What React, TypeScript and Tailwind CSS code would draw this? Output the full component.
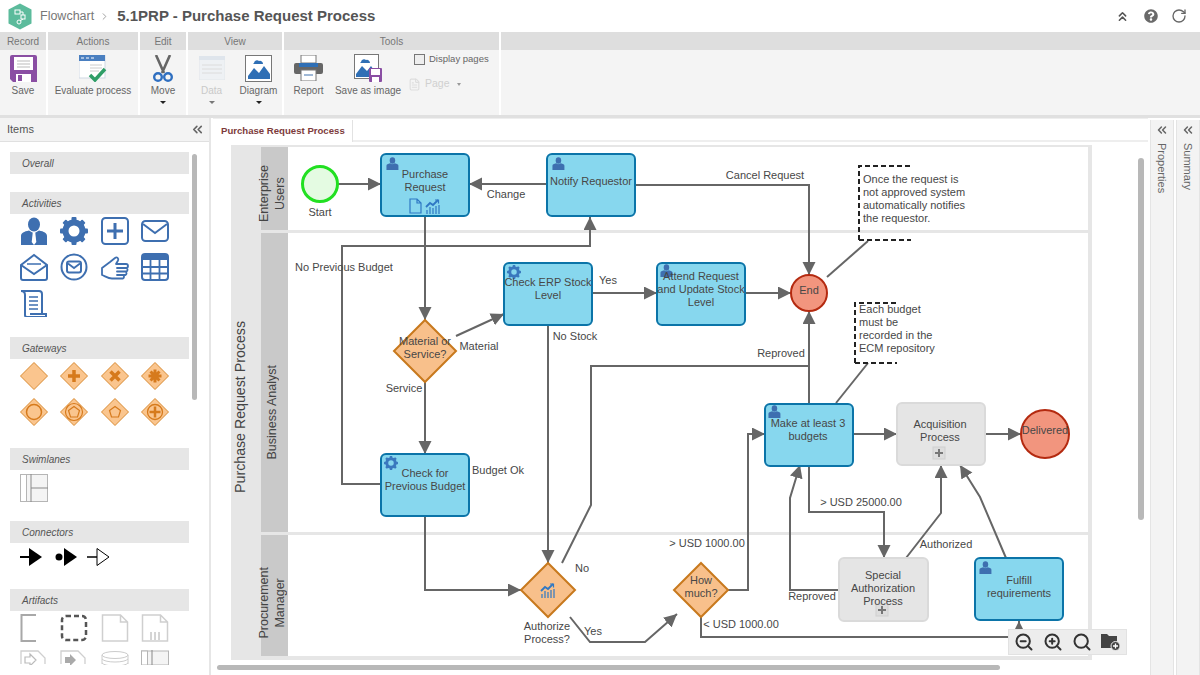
import React from "react";
import { ChevronsLeft, ChevronsUp, RotateCw, ChevronRight, ZoomIn, ZoomOut, Search, FileText } from "lucide-react";
import { FaQuestionCircle } from "react-icons/fa";

const BLUE = "#3e6fb0";
const ORANGE = "#d67a1c";

function Person({ x = 0, y = 0, s = 1, color = BLUE, tie = "#fff" }: { x?: number; y?: number; s?: number; color?: string; tie?: string }) {
  return (
    <g transform={`translate(${x} ${y}) scale(${s})`} fill={color}>
      <ellipse cx="14" cy="7.500" rx="6" ry="7" />
      <path d="M1 28V19c0-3 3-4.500 8-5.500l5 3 5-3c5 1 8 2.500 8 5.500v9z" />
      <path d="M12.700 16h2.600l1 9-2.300 3-2.300-3z" fill={tie} />
    </g>
  );
}

function Gear({ x = 0, y = 0, s = 1, color = BLUE }: { x?: number; y?: number; s?: number; color?: string }) {
  const teeth = [0, 45, 90, 135, 180, 225, 270, 315];
  return (
    <g transform={`translate(${x} ${y}) scale(${s})`}>
      <circle cx="14" cy="14" r="8.500" fill="none" stroke={color} strokeWidth="6" />
      {teeth.map((a) => (
        <rect key={a} x="11.500" y="0" width="5" height="5" rx="1" fill={color} transform={`rotate(${a} 14 14)`} />
      ))}
    </g>
  );
}

function Chart({ x, y, s = 1 }: { x: number; y: number; s?: number }) {
  return (
    <g transform={`translate(${x} ${y}) scale(${s})`} fill="none" stroke="#2f78c4">
      <path d="M1 8 L5 4 L8 6 L13 1" strokeWidth="1.800" />
      <path d="M10 1h3.500v3.500" strokeWidth="1.200" />
      <path d="M2 15v-4M5 15V8M8 15V9M11 15V7M14 15V6" strokeWidth="1.200" />
    </g>
  );
}

function IconBox({ children, vb = "0 0 28 28" }: { children: React.ReactNode; vb?: string }) {
  return (
    <svg width="28" height="28" viewBox={vb} fill="none">
      {children}
    </svg>
  );
}

function Diamond({ glyph }: { glyph?: React.ReactNode }) {
  return (
    <IconBox>
      <path d="M14 .5 27.500 14 14 27.500.5 14z" fill="#fac58e" stroke="#d88a33" strokeWidth="1" />
      {glyph}
    </IconBox>
  );
}

const activityIcons: React.ReactNode[] = [
  <IconBox key="a"><Person /></IconBox>,
  <IconBox key="b"><Gear /></IconBox>,
  <IconBox key="c">
    <rect x="1" y="1" width="26" height="26" rx="3.500" stroke={BLUE} strokeWidth="2" />
    <path d="M14 6v16M6 14h16" stroke={BLUE} strokeWidth="3" />
  </IconBox>,
  <IconBox key="d">
    <rect x="1" y="4" width="26" height="20" rx="3.500" stroke={BLUE} strokeWidth="2" />
    <path d="M2 7l12 9 12-9" stroke={BLUE} strokeWidth="2" />
  </IconBox>,
  <IconBox key="e">
    <path d="M1 12 14 2l13 10v13a2 2 0 0 1-2 2H3a2 2 0 0 1-2-2z" stroke={BLUE} strokeWidth="2" />
    <path d="M1 12l13 9 13-9" stroke={BLUE} strokeWidth="2" />
    <path d="M7 11h14" stroke={BLUE} strokeWidth="1.500" />
  </IconBox>,
  <IconBox key="f">
    <circle cx="14" cy="14" r="12.500" stroke={BLUE} strokeWidth="2" />
    <rect x="7" y="8.500" width="14" height="11" rx="2" stroke={BLUE} strokeWidth="2" />
    <path d="M8 10.500l6 4.500 6-4.500" stroke={BLUE} strokeWidth="1.800" />
  </IconBox>,
  <IconBox key="g">
    <path
      d="M1 15L9 9l5-4c2-1.500 4 .5 3 2.500L15 11h10a2 2 0 0 1 0 4h-9h9.500a2 2 0 0 1 0 3.500H16h8.500a2 2 0 0 1 0 3.500H16h6a2 2 0 0 1 0 3.500H11C7 25.500 4 23 1 22z"
      stroke={BLUE}
      strokeWidth="1.800"
      strokeLinejoin="round"
    />
  </IconBox>,
  <IconBox key="h">
    <rect x="1" y="1" width="26" height="26" rx="3" stroke={BLUE} strokeWidth="2" />
    <rect x="1" y="1" width="26" height="6" fill={BLUE} />
    <path d="M1 14h26M1 20.500h26M9.500 7v20M18.500 7v20" stroke={BLUE} strokeWidth="1.800" />
  </IconBox>,
  <IconBox key="i">
    <path d="M1 2h18a3 3 0 0 1 3 3v20M1 2c3 0 4 1 4 4v20a2 2 0 0 0 2 2h19v-3H10" stroke={BLUE} strokeWidth="2" />
    <path d="M9 8h9M9 12h9M9 16h9M9 20h9" stroke={BLUE} strokeWidth="1.600" />
  </IconBox>,
];

const gatewayGlyphs: (React.ReactNode | undefined)[] = [
  undefined,
  <path key="p" d="M14 8v12M8 14h12" stroke={ORANGE} strokeWidth="3.500" />,
  <path key="x" d="M9.500 9.500l9 9M18.500 9.500l-9 9" stroke={ORANGE} strokeWidth="3.500" />,
  <path key="a" d="M14 7.500v13M7.500 14h13M9.500 9.500l9 9M18.500 9.500l-9 9" stroke={ORANGE} strokeWidth="3" />,
  <circle key="c" cx="14" cy="14" r="7.500" stroke={ORANGE} strokeWidth="1.500" />,
  <g key="pp" stroke={ORANGE} strokeWidth="1.200">
    <circle cx="14" cy="14" r="8.500" />
    <path d="M14 8.500l5.500 4-2 6.500h-7l-2-6.500z" />
  </g>,
  <path key="p2" d="M14 8.500l5.500 4-2 6.500h-7l-2-6.500z" stroke={ORANGE} strokeWidth="1.200" />,
  <g key="cp" stroke={ORANGE} strokeWidth="1.300">
    <circle cx="14" cy="14" r="7.500" />
    <path d="M14 8.500v11M8.500 14h11" strokeWidth="2.500" />
  </g>,
];

function Section({ title, className, children }: { title: string; className: string; children?: React.ReactNode }) {
  return (
    <div className={className}>
      <div className="h-[22px] bg-[#e6e6e6] pl-3 flex items-center text-[10px] italic text-[#555]">{title}</div>
      {children}
    </div>
  );
}

function Items() {
  return (
    <aside className="w-[211px] shrink-0 h-full border-r-2 border-[#e6e6e6] overflow-hidden flex flex-col">
      <div className="h-[24px] bg-[#f3f3f3] border-b border-[#e0e0e0] flex items-center justify-between pl-[7px] pr-[4px] shrink-0">
        <span className="text-[11px] text-[#555]">Items</span>
        <ChevronsLeft size={15} strokeWidth={2.600} color="#666" />
      </div>
      <div className="relative pl-[10px] w-[179px] box-content pt-[10px]">
        <Section title="Overall" className="" />
        <Section title="Activities" className="mt-[18px]">
          <div className="grid grid-cols-4 pt-[3px] pl-[10px] auto-rows-[36px] w-[171px]">
            {activityIcons.map((ic, i) => (
              <div key={i} className="w-[40.500px]">{ic}</div>
            ))}
          </div>
        </Section>
        <Section title="Gateways" className="mt-[12px]">
          <div className="grid grid-cols-4 pt-[3px] pl-[10px] auto-rows-[36px] w-[171px]">
            {gatewayGlyphs.map((g, i) => (
              <div key={i} className="w-[40.500px]"><Diamond glyph={g} /></div>
            ))}
          </div>
        </Section>
        <Section title="Swimlanes" className="mt-[14px]">
          <div className="pt-[4px] pl-[10px] h-[38px]">
            <IconBox>
              <rect x=".5" y=".5" width="27" height="27" fill="#f4f4f4" stroke="#b5b5b5" />
              <rect x=".5" y=".5" width="6" height="27" fill="#fff" stroke="#b5b5b5" />
              <path d="M11 0v28M11 14h17" stroke="#8a8a8a" />
            </IconBox>
          </div>
        </Section>
        <Section title="Connectors" className="mt-[13px]">
          <div className="pt-[4px] pl-[10px] h-[38px] flex items-start">
            <svg width="24" height="20" viewBox="0 0 24 20">
              <path d="M0 10h12" stroke="#000" strokeWidth="2" />
              <path d="M9 1l13 9-13 9z" fill="#000" />
            </svg>
            <svg width="24" height="20" viewBox="0 0 24 20" className="ml-[11px]">
              <circle cx="4" cy="10" r="3.500" fill="#000" />
              <path d="M9 1l13 9-13 9z" fill="#000" />
            </svg>
            <svg width="24" height="20" viewBox="0 0 24 20" className="ml-[8px]">
              <path d="M0 10h10" stroke="#000" strokeWidth="1.500" />
              <path d="M10 1.500l12 8.500-12 8.500z" fill="#fff" stroke="#000" />
            </svg>
          </div>
        </Section>
        <Section title="Artifacts" className="mt-[8px]">
          <div className="grid grid-cols-4 pt-[3px] pl-[10px] auto-rows-[36px] w-[171px]">
            <div className="w-[40.500px]"><IconBox><path d="M16 1H1.500v26H16" stroke="#a8a8a8" strokeWidth="2" /></IconBox></div>
            <div className="w-[40.500px]"><IconBox><rect x="2" y="2" width="24" height="24" rx="4" stroke="#555" strokeWidth="2.500" strokeDasharray="5 3" /></IconBox></div>
            <div className="w-[40.500px]"><IconBox><path d="M1.500 1h18l7 7v19h-25z M19.500 1v7h7" stroke="#cfcfcf" strokeWidth="1.500" /></IconBox></div>
            <div className="w-[40.500px]"><IconBox><path d="M1.500 1h18l7 7v19h-25z M19.500 1v7h7" stroke="#cfcfcf" strokeWidth="1.500" /><path d="M10 18v8M14 18v8M18 18v8" stroke="#aaa" /></IconBox></div>
            <div className="w-[40.500px] h-[15px] overflow-hidden"><IconBox><path d="M1 14V1h17l7 7v6" stroke="#cfcfcf" strokeWidth="1.300" /><path d="M5 7h5V4l6 6-6 6v-3H5z" stroke="#bbb" strokeWidth="1.200" fill="#fff" /></IconBox></div>
            <div className="w-[40.500px] h-[15px] overflow-hidden"><IconBox><path d="M1 14V1h17l7 7v6" stroke="#cfcfcf" strokeWidth="1.300" /><path d="M5 7h5V4l6 6-6 6v-3H5z" fill="#aaa" /></IconBox></div>
            <div className="w-[40.500px] h-[15px] overflow-hidden"><IconBox><ellipse cx="14" cy="5" rx="13" ry="3.500" stroke="#ccc" /><path d="M1 5v9M27 5v9M1 9c3 4 23 4 26 0M1 13c3 4 23 4 26 0" stroke="#ccc" /></IconBox></div>
            <div className="w-[40.500px] h-[15px] overflow-hidden"><IconBox><rect x=".5" y="1" width="27" height="14" fill="#f4f4f4" stroke="#b5b5b5" /><rect x=".5" y="1" width="6" height="14" fill="#fff" stroke="#b5b5b5" /><path d="M11 0v15" stroke="#888" /></IconBox></div>
          </div>
        </Section>
        <div className="absolute left-[192px] top-[12px] w-[5px] h-[246px] bg-[#b8b8b8] rounded-sm" />
      </div>
    </aside>
  );
}

type L = { x: number; y: number; t: string; left?: boolean };
const labels: L[] = [
  { x: 320, y: 212, t: "Start" },
  { x: 425, y: 181, t: "Purchase\nRequest" },
  { x: 506, y: 194, t: "Change" },
  { x: 591, y: 181, t: "Notify Requestor" },
  { x: 765, y: 175, t: "Cancel Request" },
  { x: 863, y: 198.500, t: "Once the request is\nnot approved system\nautomatically notifies\nthe requestor.", left: true },
  { x: 344, y: 267, t: "No Previous Budget" },
  { x: 548, y: 289, t: "Check ERP Stock\nLevel" },
  { x: 608, y: 280, t: "Yes" },
  { x: 701, y: 289, t: "Attend Request\nand Update Stock\nLevel" },
  { x: 809, y: 290, t: "End" },
  { x: 425, y: 348, t: "Material or\nService?" },
  { x: 479, y: 346, t: "Material" },
  { x: 404, y: 388, t: "Service" },
  { x: 575, y: 336, t: "No Stock" },
  { x: 781, y: 353, t: "Reproved" },
  { x: 859, y: 328.500, t: "Each budget\nmust be\nrecorded in the\nECM repository", left: true },
  { x: 498, y: 470, t: "Budget Ok" },
  { x: 425, y: 480, t: "Check for\nPrevious Budget" },
  { x: 808, y: 430, t: "Make at least 3\nbudgets" },
  { x: 940, y: 431, t: "Acquisition\nProcess" },
  { x: 1045, y: 430, t: "Delivered" },
  { x: 861, y: 502, t: "> USD 25000.00" },
  { x: 707, y: 543, t: "> USD 1000.00" },
  { x: 582, y: 568, t: "No" },
  { x: 547, y: 633, t: "Authorize\nProcess?" },
  { x: 593, y: 631, t: "Yes" },
  { x: 701, y: 587, t: "How\nmuch?" },
  { x: 741, y: 624, t: "< USD 1000.00" },
  { x: 812, y: 596, t: "Reproved" },
  { x: 883, y: 588, t: "Special\nAuthorization\nProcess" },
  { x: 946, y: 544, t: "Authorized" },
  { x: 1019, y: 587, t: "Fulfill\nrequirements" },
];

const arrows = [
  "M338 184H381", "M547 184H469", "M425 216V320", "M456 336L504 314",
  "M381 484H342V246H590V217", "M425 382V454", "M592 293H657", "M745 293H791",
  "M635 185H809V275", "M548 325V563", "M809 404V311", "M853 434H897", "M985 434H1021",
  "M425 515V590H521", "M570 617L590 642H645L677 614", "M728 590H748V434H765",
  "M701 617V637H1019V621", "M809 465V512H884V558", "M839 590H790V498L800 465",
  "M906 558L941 513V465", "M1006 558L980 497L960 465",
];
const plainLines = ["M562 563L591 505V366H809", "M868 241L827 277", "M868 363L836 403"];

const blueNodes = [
  [381, 154], [547, 154], [504, 263], [657, 263], [381, 454], [765, 404], [975, 558],
];

function Diagram() {
  return (
    <>
      <svg width="935" height="533" viewBox="213 142 935 533" className="absolute left-0 top-0">
        <defs>
          <marker id="arr" markerUnits="userSpaceOnUse" markerWidth="15" markerHeight="15" refX="13" refY="6.500" orient="auto">
            <path d="M0 0L13 6.500L0 13z" fill="#666" />
          </marker>
        </defs>
        {arrows.map((d) => (
          <path key={d} d={d} fill="none" stroke="#666" strokeWidth="2" markerEnd="url(#arr)" />
        ))}
        {plainLines.map((d) => (
          <path key={d} d={d} fill="none" stroke="#666" strokeWidth="2" />
        ))}
        <circle cx="320" cy="184" r="17.500" fill="#e4fbe2" stroke="#22e022" strokeWidth="3" />
        {blueNodes.map(([x, y]) => (
          <rect key={x + "-" + y} x={x} y={y} width="88" height="62" rx="5" fill="#87d7ee" stroke="#0b74a8" strokeWidth="2" />
        ))}
        <circle cx="809" cy="293" r="18" fill="#f2957e" stroke="#b42a10" strokeWidth="2" />
        <circle cx="1045" cy="434" r="24" fill="#f2957e" stroke="#b42a10" strokeWidth="2" />
        <path d="M425 320L456 351L425 382L394 351Z" fill="#f8c08b" stroke="#c8791d" strokeWidth="2" />
        <path d="M548 563L575 590L548 617L521 590Z" fill="#f8c08b" stroke="#c8791d" strokeWidth="2" />
        <path d="M701 563L728 590L701 617L674 590Z" fill="#f8c08b" stroke="#c8791d" strokeWidth="2" />
        <rect x="897" y="403" width="88" height="62" rx="5" fill="#e5e5e5" stroke="#dadada" strokeWidth="2" />
        <rect x="839" y="558" width="89" height="63" rx="5" fill="#e5e5e5" stroke="#dadada" strokeWidth="2" />
        <rect x="933" y="447" width="12" height="12" fill="#ddd" stroke="#cfcfcf" />
        <path d="M939 449v8M935 453h8" stroke="#777" strokeWidth="2" />
        <rect x="876" y="604" width="12" height="12" fill="#ddd" stroke="#cfcfcf" />
        <path d="M882 606v8M878 610h8" stroke="#777" strokeWidth="2" />
        <Person x={386} y={157} s={0.46} tie="#3e6fb0" />
        <Person x={552} y={157} s={0.46} tie="#3e6fb0" />
        <Person x={660} y={264} s={0.46} tie="#3e6fb0" />
        <Person x={768} y={405} s={0.46} tie="#3e6fb0" />
        <Person x={979} y={561} s={0.46} tie="#3e6fb0" />
        <Gear x={507} y={265} s={0.5} color="#3a78be" />
        <Gear x={384} y={456} s={0.5} color="#3a78be" />
        <g fill="none" stroke="#2f78c4" strokeWidth="1.200">
          <path d="M410 199h7l4 4v10h-11zM417 199v4h4" />
        </g>
        <Chart x={425} y={199} />
        <Chart x={540} y={583} />
        <path d="M859 240V166H911M859 240H911" fill="none" stroke="#222" strokeWidth="2" strokeDasharray="5 3" />
        <path d="M855 363V303H897M855 363H897" fill="none" stroke="#222" strokeWidth="2" strokeDasharray="5 3" />
      </svg>
      {labels.map((l) => (
        <div
          key={l.t}
          className={`absolute -translate-y-1/2 whitespace-pre text-[11px] leading-[13px] text-[#474747] ${l.left ? "text-left" : "text-center -translate-x-1/2"}`}
          style={{ left: l.x - 213, top: l.y - 142 }}
        >
          {l.t}
        </div>
      ))}
    </>
  );
}

function Lane({ title, className, textClass }: { title: string; className: string; textClass: string }) {
  return (
    <div className={className}>
      <div className="w-[27px] h-full bg-[#c9c9c9] flex items-center justify-center">
        <span className={`relative left-[-3px] [writing-mode:vertical-rl] rotate-180 whitespace-pre text-center text-[12.500px] leading-[16px] text-[#444] ${textClass}`}>{title}</span>
      </div>
    </div>
  );
}

function RibbonSection({ title, className, children }: { title: string; className: string; children?: React.ReactNode }) {
  return (
    <div className={`flex flex-col ${className}`}>
      <div className="h-[18px] bg-[#dedede] flex items-center justify-center text-[10px] text-[#777]">{title}</div>
      <div className="flex-1 bg-[#f4f4f4] flex relative">{children}</div>
    </div>
  );
}

function RibbonBtn({ label, icon, className, caret, muted }: { label: string; icon: React.ReactNode; className: string; caret?: boolean; muted?: boolean }) {
  return (
    <div className={`flex flex-col items-center pt-[4px] ${className}`}>
      <div className="h-[28px] flex items-center justify-center">{icon}</div>
      <div className={`mt-[1px] text-[10px] leading-[16px] whitespace-nowrap ${muted ? "text-[#c9c9c9]" : "text-[#666]"}`}>{label}</div>
      {caret && <div className={`mt-[2px] w-0 h-0 border-x-[3px] border-x-transparent border-t-[3px] ${muted ? "border-t-[#777]" : "border-t-[#222]"}`} />}
    </div>
  );
}

export default function App() {
  return (
    <div className="w-[1200px] h-[675px] overflow-hidden bg-white flex flex-col font-['Liberation_Sans',Arial,sans-serif]">
      <header className="h-[32px] shrink-0 flex items-center pl-[8px] pr-[13px]">
        <svg width="24" height="27" viewBox="0 0 24 27">
          <path d="M12 .5 23.500 6.500v14L12 26.500.5 20.500v-14z" fill="#5cbb9c" />
          <rect x="7" y="7" width="5" height="4" fill="none" stroke="#fff" />
          <rect x="13" y="12" width="4" height="4" fill="none" stroke="#fff" />
          <circle cx="11" cy="19" r="2" fill="none" stroke="#fff" />
          <path d="M12 9h3v3M15 16l-3 2" stroke="#fff" fill="none" />
        </svg>
        <span className="ml-[8px] text-[12.500px] text-[#777]">Flowchart</span>
        <ChevronRight size={11} color="#999" strokeWidth={2} className="ml-[5px]" />
        <span className="ml-[7px] text-[15px] font-bold text-[#555]">5.1PRP - Purchase Request Process</span>
        <div className="ml-auto flex items-center">
          <ChevronsUp size={15} color="#555" strokeWidth={2.500} />
          <FaQuestionCircle size={14} color="#6a6a6a" className="ml-[14px]" />
          <RotateCw size={16} color="#666" strokeWidth={2} className="ml-[13px]" />
        </div>
      </header>

      <div className="h-[86px] shrink-0 flex gap-[2px] bg-white border-b-[3px] border-[#e0e0e0]">
        <RibbonSection title="Record" className="w-[46px]">
          <RibbonBtn
            label="Save"
            className="w-full"
            icon={
              <svg width="27" height="27" viewBox="0 0 27 27">
                <path d="M0 2a2 2 0 0 1 2-2h23a2 2 0 0 1 2 2v25H3l-3-3z" fill="#8a4ea3" />
                <rect x="4" y="2" width="19" height="13" fill="#fff" />
                <path d="M7 6h13M7 9h13M7 12h13" stroke="#bbb" />
                <rect x="6" y="19" width="15" height="8" fill="#fff" />
                <rect x="8" y="20" width="4" height="6" fill="#8a4ea3" />
              </svg>
            }
          />
        </RibbonSection>
        <RibbonSection title="Actions" className="w-[90px]">
          <RibbonBtn
            label="Evaluate process"
            className="w-full"
            icon={
              <svg width="28" height="27" viewBox="0 0 28 27">
                <rect x="0" y="0" width="26" height="23" fill="#fff" stroke="#cfd8e3" />
                <rect x="0" y="0" width="26" height="6" fill="#4a7fc0" />
                <path d="M2 3h3M7 3h3M12 3h3" stroke="#fff" />
                <path d="M11 10h12M11 13h12M11 16h9" stroke="#ccc" />
                <path d="M11 20l5 5 10-11" stroke="#2f9e67" strokeWidth="3.500" fill="none" />
              </svg>
            }
          />
        </RibbonSection>
        <RibbonSection title="Edit" className="w-[46px]">
          <RibbonBtn
            label="Move"
            className="w-full"
            caret
            icon={
              <svg width="20" height="27" viewBox="0 0 20 27">
                <path d="M3 0l8 18M17 0L9 18" stroke="#666" strokeWidth="2.600" />
                <circle cx="5" cy="22" r="3.800" fill="none" stroke="#2f6fc0" strokeWidth="2.400" />
                <circle cx="15" cy="22" r="3.800" fill="none" stroke="#2f6fc0" strokeWidth="2.400" />
              </svg>
            }
          />
        </RibbonSection>
        <RibbonSection title="View" className="w-[94px]">
          <RibbonBtn
            label="Data"
            className="w-[47px]"
            caret
            muted
            icon={
              <svg width="26" height="24" viewBox="0 0 26 24">
                <rect x="0" y="0" width="26" height="24" fill="#eef1f4" stroke="#e3e6ea" />
                <rect x="0" y="0" width="26" height="4" fill="#dfe5ec" />
                <path d="M3 9h20M3 13h20M3 17h20" stroke="#dcdcdc" />
              </svg>
            }
          />
          <RibbonBtn
            label="Diagram"
            className="w-[47px]"
            caret
            icon={
              <svg width="27" height="27" viewBox="0 0 27 27">
                <rect x=".5" y=".5" width="26" height="26" fill="#fff" stroke="#777" />
                <path d="M3 24V21l6-8 5 5 5-7 6 8v5z" fill="#2f6fb5" />
                <path d="M9 8a3 3 0 0 1 5-2 3 3 0 0 1 4 3H8z" fill="#2f6fb5" />
              </svg>
            }
          />
        </RibbonSection>
        <RibbonSection title="Tools" className="w-[215px]">
          <RibbonBtn
            label="Report"
            className="w-[49px]"
            icon={
              <svg width="29" height="26" viewBox="0 0 29 26">
                <rect x="7" y="0" width="15" height="8" fill="#fff" stroke="#777" />
                <rect x="0" y="8" width="29" height="11" rx="2" fill="#666" />
                <rect x="5" y="8" width="19" height="4" fill="#2f6fb5" />
                <rect x="7" y="15" width="15" height="11" fill="#fff" stroke="#777" />
                <path d="M10 20h9" stroke="#9fb8d6" strokeWidth="2" />
              </svg>
            }
          />
          <RibbonBtn
            label="Save as image"
            className="w-[68px] ml-[1px]"
            icon={
              <svg width="28" height="28" viewBox="0 0 28 28">
                <rect x=".5" y=".5" width="24" height="24" fill="#fff" stroke="#777" />
                <path d="M2 23v-3l6-8 5 5 4-5 5 7v4z" fill="#2f6fb5" />
                <path d="M7 8a3 3 0 0 1 5-2 3 3 0 0 1 4 3H6z" fill="#2f6fb5" />
                <rect x="15" y="14" width="13" height="14" rx="1" fill="#8a4ea3" />
                <rect x="17" y="15" width="9" height="6" fill="#fff" />
                <rect x="18" y="23" width="7" height="5" fill="#fff" />
              </svg>
            }
          />
          <div className="pl-[12px] pt-[2px]">
            <div className="flex items-center">
              <div className="w-[11px] h-[11px] border border-[#777] bg-[#eee]" />
              <span className="ml-[4px] text-[9.500px] text-[#666]">Display pages</span>
            </div>
            <div className="flex items-center mt-[10px] -ml-[6px]">
              <FileText size={13} color="#ddd" />
              <span className="ml-[4px] text-[10.500px] text-[#d0d0d0]">Page</span>
              <div className="ml-[7px] w-0 h-0 border-x-[2.500px] border-x-transparent border-t-[3px] border-t-[#999]" />
            </div>
          </div>
        </RibbonSection>
        <div className="flex-1 flex flex-col">
          <div className="h-[18px] bg-[#dedede]" />
          <div className="flex-1 bg-[#f4f4f4]" />
        </div>
      </div>

      <main className="flex-1 flex min-h-0">
        <Items />
        <section className="w-[935px] ml-[2px] h-full flex flex-col">
          <div className="h-[24px] flex shrink-0 pt-[1px] border-t border-[#eee]">
            <div className="w-[140px] border-r border-[#e2e2e2] pl-[8px] flex items-center text-[9.600px] font-bold text-[#7d3b3b]">Purchase Request Process</div>
            <div className="flex-1 border-b-2 border-[#eee]" />
          </div>
          <div className="relative flex-1">
            <div className="ml-[18px] mt-[3px] w-[861px] h-[515px] flex border-t-2 border-r-4 border-b-4 border-[#e6e6e6]">
              <div className="w-[30px] h-full bg-[#e6e6e6] flex items-center justify-center">
                <span className="[writing-mode:vertical-rl] rotate-180 text-[14.200px] text-[#444] whitespace-nowrap relative top-[5px] left-[-5px]">Purchase Request Process</span>
              </div>
              <div className="flex-1 flex flex-col">
                <Lane title={"Enterprise\nUsers"} className="h-[83px] border-b-[3px] border-[#e6e6e6] box-content" textClass="top-[5px]" />
                <Lane title="Business Analyst" className="h-[299px] border-b-[3px] border-[#e6e6e6] box-content" textClass="top-[30px]" />
                <Lane title={"Procurement\nManager"} className="flex-1 min-h-0" textClass="top-[7px]" />
              </div>
            </div>
            <Diagram />
            <div className="absolute left-[925px] top-[16px] w-[6px] h-[362px] bg-[#b8b8b8] rounded-sm" />
            <div className="absolute left-[4px] top-[523px] w-[783px] h-[5px] bg-[#b8b8b8] rounded-sm" />
            <div className="absolute left-[795px] top-[487px] w-[119px] h-[26px] bg-[#ededed] border border-[#e2e2e2] flex items-center pl-[5px] gap-[9px]">
              <ZoomOut size={20} color="#333" strokeWidth={2.400} />
              <ZoomIn size={20} color="#333" strokeWidth={2.400} />
              <Search size={20} color="#333" strokeWidth={2.400} />
              <svg width="20" height="18" viewBox="0 0 20 18">
                <path d="M0 1h6l2 2h8v12H0z" fill="#444" />
                <circle cx="14.500" cy="13" r="4.500" fill="#444" stroke="#ededed" />
                <path d="M14.500 10.500v5M12 13h5" stroke="#fff" strokeWidth="1.300" />
              </svg>
            </div>
          </div>
        </section>
        <div className="ml-[2px] mt-[2px] w-[24px] bg-[#f3f3f3] border-x border-[#e4e4e4] flex flex-col items-center pt-[3px]">
          <ChevronsLeft size={14} strokeWidth={2.600} color="#666" />
          <span className="mt-[6px] [writing-mode:vertical-rl] text-[11px] text-[#666]">Properties</span>
        </div>
        <div className="ml-[2px] mt-[2px] w-[24px] bg-[#f3f3f3] border-x border-[#e4e4e4] flex flex-col items-center pt-[3px]">
          <ChevronsLeft size={14} strokeWidth={2.600} color="#666" />
          <span className="mt-[6px] [writing-mode:vertical-rl] text-[11px] text-[#666]">Summary</span>
        </div>
      </main>
    </div>
  );
}
